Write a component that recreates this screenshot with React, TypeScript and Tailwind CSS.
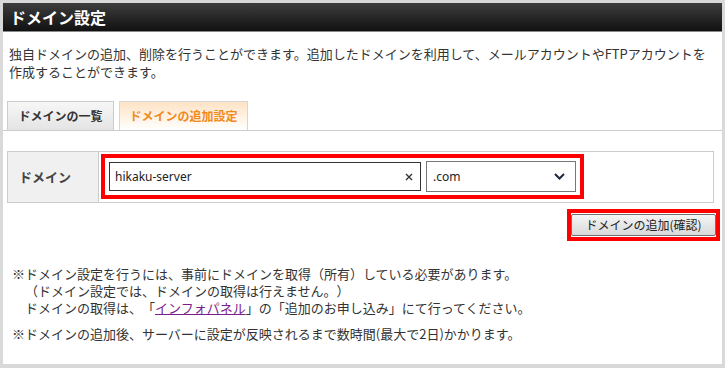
import React from "react";

const jp = { fontFamily: '"Noto Sans CJK JP", "Noto Sans", sans-serif' };

export default function App() {
  return (
    <div
      className="w-[725px] h-[368px] bg-[#d9d9d9] pt-[3px] pl-[3px] pr-[3px] pb-[4px] text-[#333] [text-spacing-trim:space-all]"
      style={jp}
    >
      <div className="bg-white h-full flex flex-col">
        {/* Header */}
        <div className="h-[29px] bg-gradient-to-b from-[#3e3e3e] to-[#121212] border-b border-[#8a8a8a] flex items-center pl-[7px]">
          <span className="text-white font-bold text-[16px] leading-none">ドメイン設定</span>
        </div>

        {/* Description */}
        <div className="mt-[13px] px-[6px] text-[13px] leading-[18px]">
          <p>独自ドメインの追加、削除を行うことができます。追加したドメインを利用して、メールアカウントやFTPアカウントを</p>
          <p>作成することができます。</p>
        </div>

        {/* Tabs */}
        <div className="mt-[20px] flex items-end gap-[5px] pl-[4px] border-b border-[#cccccc] h-[30px]">
          <div className="w-[107px] h-[29px] border border-b-0 border-[#cccccc] bg-gradient-to-b from-[#f7f7f7] to-[#e4e4e4] flex items-center justify-center">
            <span className="text-[12px] font-bold text-[#333]">ドメインの一覧</span>
          </div>
          <div className="w-[129px] h-[29px] border border-b-0 border-[#d6d6d6] bg-gradient-to-b from-[#fde3c4] to-[#ffffff] flex items-center justify-center">
            <span className="text-[12px] font-bold text-[#f08a1c]">ドメインの追加設定</span>
          </div>
        </div>

        {/* Table */}
        <div className="mt-[20px] ml-[4px] w-[707px] h-[52px] border border-[#cccccc] flex">
          <div className="w-[91px] bg-[#f0f0f0] border-r border-[#cccccc] flex items-center pl-[11px]">
            <span className="text-[13px] font-bold text-[#444]">ドメイン</span>
          </div>
          <div className="flex-1 pt-[2px] pl-[2px]">
            <div className="w-[483px] h-[45px] border-[4px] border-[#ff0000] flex items-center pl-[4px] gap-[5px]">
              <div className="w-[312px] h-[29px] border border-[#333] flex items-center justify-between pl-[5px] pr-[7px]">
                <span className="text-[12px] text-[#222]" style={{ fontFamily: '"Noto Sans", sans-serif' }}>
                  hikaku-server
                </span>
                <svg width="8" height="8" viewBox="0 0 8 8">
                  <path d="M1 1 L7 7 M7 1 L1 7" stroke="#333" strokeWidth="1.4" />
                </svg>
              </div>
              <div className="w-[150px] h-[31px] border border-[#777] flex items-center justify-between pl-[6px] pr-[10px]">
                <span className="text-[12px] text-[#222]" style={{ fontFamily: '"Noto Sans", sans-serif' }}>
                  .com
                </span>
                <svg width="11" height="7" viewBox="0 0 11 7">
                  <path d="M1 1 L5.5 5.5 L10 1" stroke="#1e2a3a" strokeWidth="2" fill="none" />
                </svg>
              </div>
            </div>
          </div>
        </div>

        {/* Button */}
        <div className="mt-[6px] flex justify-end pr-[2px]">
          <div className="w-[153px] h-[32px] border-[4px] border-[#ff0000] flex items-center justify-center">
            <div className="w-[145px] h-[22px] border border-[#707070] rounded-[2px] bg-gradient-to-b from-[#f5f5f5] to-[#d9d9d9] flex items-center justify-center">
              <span className="text-[12px] text-[#222] leading-none">ドメインの追加(確認)</span>
            </div>
          </div>
        </div>

        {/* Notes */}
        <div className="mt-[24px] pl-[9px] text-[13px] leading-[17px]">
          <p>※ドメイン設定を行うには、事前にドメインを取得（所有）している必要があります。</p>
          <p>{"\u3000（ドメイン設定では、ドメインの取得は行えません。）"}</p>
          <p>
            {"\u3000ドメインの取得は、「"}
            <a className="text-[#7a1e8e] underline">インフォパネル</a>
            {"」の「追加のお申し込み」にて行ってください。"}
          </p>
          <p className="mt-[9px]">※ドメインの追加後、サーバーに設定が反映されるまで数時間(最大で2日)かかります。</p>
        </div>
      </div>
    </div>
  );
}
